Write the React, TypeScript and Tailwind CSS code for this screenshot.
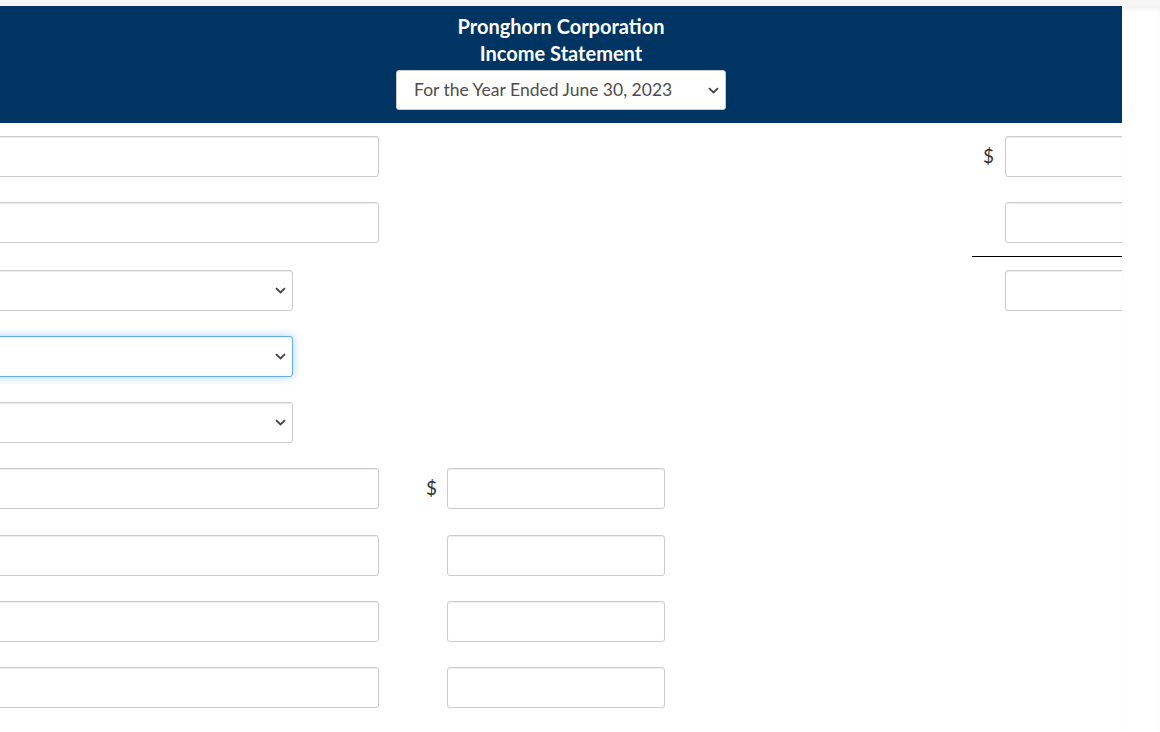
import React from 'react';

const font = { fontFamily: 'Lato, "Open Sans", Arial, sans-serif' };

function TextBox({ width }: { width: string }) {
  return (
    <div
      className={`${width} h-[41px] shrink-0 rounded-[3px] border border-[#cccccc] bg-white shadow-[inset_0_1px_1px_rgba(0,0,0,0.075)]`}
    />
  );
}

function Chevron({ className }: { className?: string }) {
  return (
    <svg width="11" height="7" viewBox="0 0 11 7" className={className}>
      <path d="M1 1.2 L5.5 5.5 L10 1.2" fill="none" stroke="#444" strokeWidth="1.8" />
    </svg>
  );
}

function SelectBox({ focused }: { focused?: boolean }) {
  return (
    <div
      className={
        'flex h-[41px] w-[323px] items-center justify-end rounded-[3px] border bg-white pr-[6px] ' +
        (focused
          ? 'border-[#66afe9] shadow-[inset_0_1px_1px_rgba(0,0,0,0.075),0_0_8px_rgba(102,175,233,0.6)]'
          : 'border-[#cccccc] shadow-[inset_0_1px_1px_rgba(0,0,0,0.075)]')
      }
    >
      <Chevron />
    </div>
  );
}

function Dollar() {
  return <span className="text-[19px] leading-none text-[#333]">$</span>;
}

type Row = {
  left: 'input' | 'select' | 'focus';
  mid?: 'dollar' | 'plain';
  right?: 'dollar' | 'plain';
};

const topRows: Row[] = [
  { left: 'input', right: 'dollar' },
  { left: 'input', right: 'plain' },
];

const bottomRows: Row[] = [
  { left: 'select', right: 'plain' },
  { left: 'focus' },
  { left: 'select' },
  { left: 'input', mid: 'dollar' },
  { left: 'input', mid: 'plain' },
  { left: 'input', mid: 'plain' },
  { left: 'input', mid: 'plain' },
];

function FormRow({ row, first }: { row: Row; first?: boolean }) {
  return (
    <div className={`flex h-[41px] items-center ${first ? 'mt-[13px]' : 'mt-[25.3px]'}`}>
      <div className="flex w-[409px] shrink-0">
        {row.left === 'input' ? (
          <TextBox width="w-[409px]" />
        ) : (
          <SelectBox focused={row.left === 'focus'} />
        )}
      </div>
      <div className="flex w-[286px] shrink-0 items-center justify-end">
        {row.mid && (
          <>
            <span className="mr-[11px] w-[10px]">{row.mid === 'dollar' && <Dollar />}</span>
            <TextBox width="w-[218px]" />
          </>
        )}
      </div>
      {row.right && (
        <div className="ml-[318px] flex shrink-0 items-center">
          <span className="mr-[12px] w-[10px]">{row.right === 'dollar' && <Dollar />}</span>
          <TextBox width="w-[200px]" />
        </div>
      )}
    </div>
  );
}

export default function App() {
  return (
    <div className="flex min-h-[732px] flex-col bg-white" style={font}>
      <div className="h-[6px] bg-[#f6f6f6]" />
      <div className="flex flex-1">
        <div className="w-[1122px] shrink-0 overflow-hidden">
          <div className="flex h-[117px] flex-col items-center bg-[#003462] pt-[7px]">
            <div className="text-center text-[20px] font-bold leading-[27px] text-white">
              <div>Pronghorn Corporation</div>
              <div>Income Statement</div>
            </div>
            <div className="mt-[3px] flex h-[40px] w-[330px] items-center justify-between rounded-[3px] border border-[#cccccc] bg-white pl-[17px] pr-[6px]">
              <span className="text-[17.5px] text-[#4d4d4d]">For the Year Ended June 30, 2023</span>
              <Chevron />
            </div>
          </div>
          <div className="-ml-[30px] flex flex-col pb-[20px]">
            {topRows.map((r, i) => (
              <FormRow key={'t' + i} row={r} first={i === 0} />
            ))}
            <div className="mt-[12.4px] flex h-px">
              <div className="ml-[1002px] w-[200px] bg-black" />
            </div>
            {bottomRows.map((r, i) => (
              <div key={'b' + i} className={i === 0 ? '-mt-[12.4px]' : ''}>
                <FormRow row={r} />
              </div>
            ))}
          </div>
        </div>
        <div className="flex-1 shadow-[inset_0_5px_6px_-3px_rgba(0,0,0,0.08)]" />
      </div>
    </div>
  );
}
